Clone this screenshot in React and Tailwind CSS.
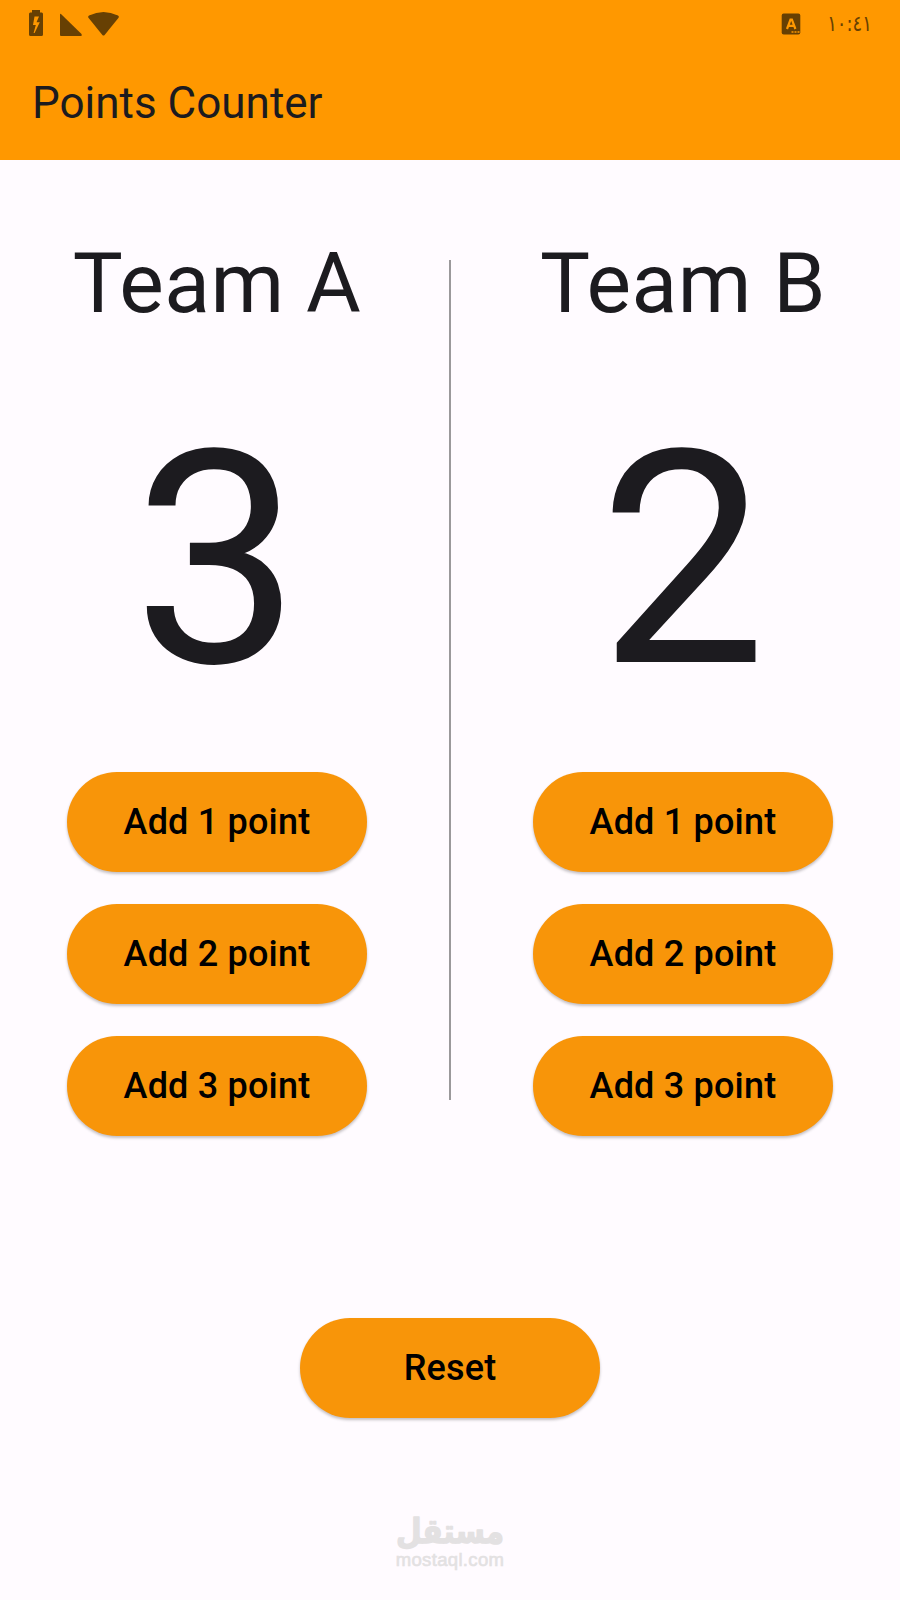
import { useState } from "react";

function StatusBar() {
  return (
    <div className="flex h-12 items-center justify-between text-[#674003]">
      <div className="flex h-12 items-center">
        <svg className="h-12 w-[130px]" viewBox="0 0 130 48" fill="currentColor">
          <path fillRule="evenodd" d="M32 10h8v2.500h1.800q1.200 0 1.200 1.500v20.500q0 1.500-1.500 1.500h-11q-1.500 0-1.500-1.500V14q0-1.500 1.200-1.500H32zM34.500 16.500L33 25h2.800L33.600 33h1L39.800 22.300h-3.300L39 16.500z" />
          <path d="M60 15q0-2 1.500-.6L81.500 34q1 2-.6 2H61q-1 0-1-1z" />
          <path d="M88.400 17.800q-.8-1.400.6-2.200Q103.500 8.500 118 15.600q1.400.8.600 2.200L104.600 35q-1.100 1.200-2.200 0z" />
        </svg>
      </div>
      <div className="flex items-center pr-[28px]">
        <svg className="h-12 w-5" viewBox="0 0 20 48" fill="none">
          <rect x="0.700" y="13.500" width="18.600" height="21" rx="2" fill="currentColor" />
          <path d="M6 29l3.500-9.500h1.400L14.400 29M7.600 25.800h5.200" stroke="#ff9800" strokeWidth="2.200" />
          <path d="M10.500 32h2M13.500 32h2M16.500 32h2" stroke="#ff9800" strokeWidth="1.500" />
        </svg>
        <span className="ml-[26px] flex w-[45px] origin-right scale-x-[0.82] justify-end whitespace-nowrap font-['DejaVu_Sans',sans-serif] text-[22px] leading-none">١٠:٤١</span>
      </div>
    </div>
  );
}

function PillButton({ children, onClick }) {
  return (
    <button
      onClick={onClick}
      className="h-[100px] w-[300px] rounded-full bg-[#f89509] text-[36px] font-medium tracking-[0.2px] text-black shadow-[0_2px_3px_rgba(0,0,0,0.24)]"
    >
      {children}
    </button>
  );
}

function Team({ name, score, onAdd }) {
  return (
    <section className="flex w-[300px] flex-col items-center whitespace-nowrap">
      <h2 className="mt-[75px] h-[98px] text-[84px] leading-[98px] tracking-[0.5px]">{name}</h2>
      <p className="mt-[52px] h-[352px] text-[298px] leading-[352px] tracking-[0.5px]">{score}</p>
      <div className="mt-[35px] flex flex-col gap-8">
        {[1, 2, 3].map((n) => (
          <PillButton key={n} onClick={() => onAdd(n)}>{`Add ${n} point`}</PillButton>
        ))}
      </div>
    </section>
  );
}

function Watermark() {
  return (
    <div className="flex flex-col items-center text-[#e3e1e2]">
      <svg className="h-[46px] w-[120px] overflow-visible" viewBox="0 0 120 46" fill="currentColor">
        <text
          x="60"
          y="38"
          textAnchor="middle"
          direction="rtl"
          className="font-['DejaVu_Sans',sans-serif] text-[34px] font-bold"
          stroke="currentColor"
          strokeWidth="1.400"
          strokeLinejoin="round"
          textLength="108"
          lengthAdjust="spacingAndGlyphs"
        >
          مستقل
        </text>
      </svg>
      <span className="font-['Liberation_Sans',sans-serif] text-[18.500px] leading-none tracking-[0.350px] [-webkit-text-stroke:0.6px]">mostaql.com</span>
    </div>
  );
}

export default function App() {
  const [a, setA] = useState(3);
  const [b, setB] = useState(2);
  return (
    <div className="flex h-[1600px] w-[900px] flex-col overflow-hidden bg-[#fffbff] font-[Roboto,sans-serif] text-[#1c1b1f]">
      <header className="h-[160px] shrink-0 bg-[#ff9800]">
        <StatusBar />
        <h1 className="flex h-[110px] items-center pl-8 text-[44px] leading-none">Points Counter</h1>
      </header>
      <main className="flex justify-center gap-[82px]">
        <Team name="Team A" score={a} onAdd={(n) => setA(a + n)} />
        <div className="mt-[100px] h-[840px] w-[2px] bg-[#9b999b]" />
        <Team name="Team B" score={b} onAdd={(n) => setB(b + n)} />
      </main>
      <div className="mt-[182px] flex justify-center">
        <PillButton
          onClick={() => {
            setA(0);
            setB(0);
          }}
        >
          Reset
        </PillButton>
      </div>
      <footer className="mt-[87px] flex justify-center">
        <Watermark />
      </footer>
    </div>
  );
}
